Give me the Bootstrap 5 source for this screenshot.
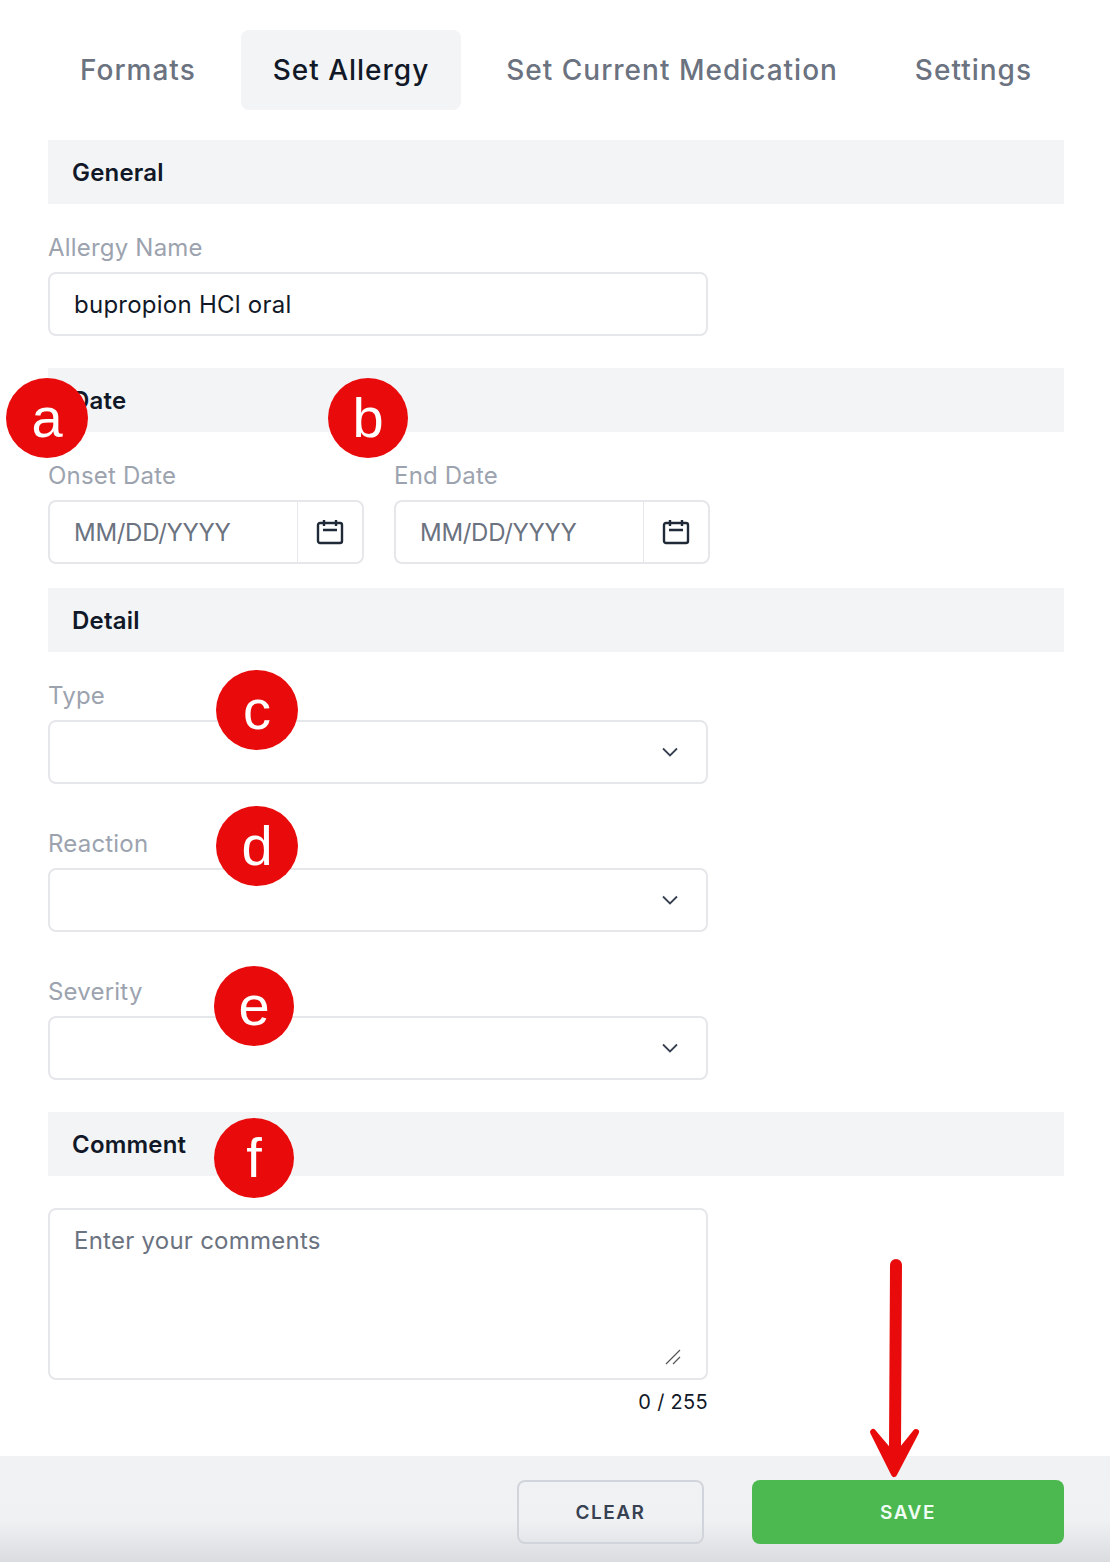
<!DOCTYPE html>
<html lang="en">
  <head>
    <meta charset="UTF-8" />
    <meta name="viewport" content="width=device-width, initial-scale=1.0" />
    <title>Set Allergy</title>
    <link
      href="https://cdn.jsdelivr.net/npm/bootstrap@5.3.2/dist/css/bootstrap.min.css"
      rel="stylesheet"
    />
    <style>
      html, body { height: 100%; overflow: hidden; }
      body { font-family: Inter, "Liberation Sans", sans-serif; color: #111827; background: #fff; }
      .page-wrap { position: relative; width: 1110px; height: 1562px; overflow: hidden; }
      .form-area { padding: 30px 46px 0 48px; height: 1456px; }

      .tab-row { height: 80px; margin-bottom: 30px; justify-content: space-between; }
      .tab-row .nav-link {
        height: 80px; padding: 0 32px; display: flex; align-items: center;
        font-size: 28px; font-weight: 500; letter-spacing: 1px; color: #6b7280;
        border-radius: 8px; background: none;
      }
      .tab-row .nav-link.active { background: #f3f4f6; color: #111827; }

      .section-bar {
        height: 64px; background: #f3f4f6; padding: 2px 24px 0; display: flex; align-items: center;
        font-size: 24px; font-weight: 600; color: #111827; margin: 0; letter-spacing: .2px;
      }
      .bar-gap-lg { margin-top: 32px; }
      .bar-gap-md { margin-top: 24px; }
      .field-first { padding-top: 28px; }
      .field-next { padding-top: 44px; }
      .field-label { display: block; font-size: 24px; line-height: 32px; color: #9ca3af; margin: 0 0 8px; letter-spacing: .2px; }
      .field-box { width: 660px; }
      .form-control, .form-select, .input-group-text { border: 2px solid #e5e7eb; border-radius: 8px; }
      .form-control, .form-select {
        height: 64px; padding: 1px 24px 0; font-size: 24px; color: #111827; box-shadow: none; letter-spacing: .25px;
      }
      .form-control::placeholder { color: #6b7280; opacity: 1; }
      .form-select {
        background-image: url("data:image/svg+xml,%3csvg xmlns='http://www.w3.org/2000/svg' viewBox='0 0 18 12'%3e%3cpath fill='none' stroke='%23374151' stroke-width='1.8' d='M2 2.5l7 7 7-7'/%3e%3c/svg%3e");
        background-position: right 27px center; background-size: 18px 12px;
      }
      .date-group { width: 316px; flex-wrap: nowrap; }
      .date-group .form-control { border-right: 0; padding-right: 0; min-width: 0; letter-spacing: -.3px; }
      .date-group .input-group-text { width: 68px; padding: 0; justify-content: center; background: #fff; }
      .date-row { gap: 30px; }
      .comment-wrap { position: relative; }
      textarea.form-control { height: 172px; padding-top: 13px; resize: none; }
      .resize-mark { position: absolute; right: 27px; bottom: 15px; }
      .char-count { font-size: 20px; line-height: 28px; color: #111827; text-align: right; margin-top: 8px; letter-spacing: .3px; }

      .footer-bar {
        height: 106px; padding: 24px 46px 0 0; gap: 48px;
        background: linear-gradient(to bottom, #f1f2f4 0%, #f0f1f3 60%, #dadcdf 100%);
      }
      .footer-bar .btn {
        height: 64px; padding-top: 8px; font-size: 19px; font-weight: 600; letter-spacing: 1.5px; border-radius: 8px;
      }
      .clear-btn { width: 187px; border: 2px solid #d1d5db; color: #374151; background: transparent; }
      .save-btn { width: 312px; border: 0; background: #4cb950; color: #f0fdf4; }

      .mark-dot {
        position: absolute; border-radius: 50%; background: #e90b0b; color: #fff;
        display: flex; align-items: center; justify-content: center;
        font-family: "Liberation Sans", Arial, sans-serif; font-size: 56px; line-height: 1;
      }
      .dot-a { left: 6px; top: 378px; width: 82px; height: 80px; }
      .dot-b { left: 328px; top: 378px; width: 80px; height: 80px; }
      .dot-c { left: 216px; top: 670px; width: 82px; height: 80px; }
      .dot-d { left: 216px; top: 806px; width: 82px; height: 80px; }
      .dot-e { left: 214px; top: 966px; width: 80px; height: 80px; }
      .dot-f { left: 214px; top: 1118px; width: 80px; height: 80px; }
      .red-arrow { position: absolute; left: 860px; top: 1250px; }
    </style>
  </head>
  <body>
    <div class="page-wrap">
      <div class="form-area">
        <!-- Tabs -->
        <ul class="nav tab-row">
          <li class="nav-item"><a class="nav-link" href="#">Formats</a></li>
          <li class="nav-item"><a class="nav-link active" href="#">Set Allergy</a></li>
          <li class="nav-item"><a class="nav-link" href="#">Set Current Medication</a></li>
          <li class="nav-item"><a class="nav-link" href="#">Settings</a></li>
        </ul>

        <form>
          <h6 class="section-bar">General</h6>
          <div class="field-box field-first">
            <label class="field-label" for="allergyName">Allergy Name</label>
            <input class="form-control" id="allergyName" type="text" value="bupropion HCl oral" />
          </div>

          <h6 class="section-bar bar-gap-lg">Date</h6>
          <div class="d-flex date-row field-first">
            <div>
              <label class="field-label" for="onsetDate">Onset Date</label>
              <div class="input-group date-group">
                <input class="form-control" id="onsetDate" type="text" placeholder="MM/DD/YYYY" />
                <span class="input-group-text">
                  <svg width="28" height="26" viewBox="0 0 28 26" fill="none" stroke="#1f2937" stroke-width="2.4"><rect x="2" y="4" width="24" height="20" rx="2"/><path d="M8 1v6M20 1v6M7 11h14"/></svg>
                </span>
              </div>
            </div>
            <div>
              <label class="field-label" for="endDate">End Date</label>
              <div class="input-group date-group">
                <input class="form-control" id="endDate" type="text" placeholder="MM/DD/YYYY" />
                <span class="input-group-text">
                  <svg width="28" height="26" viewBox="0 0 28 26" fill="none" stroke="#1f2937" stroke-width="2.4"><rect x="2" y="4" width="24" height="20" rx="2"/><path d="M8 1v6M20 1v6M7 11h14"/></svg>
                </span>
              </div>
            </div>
          </div>

          <h6 class="section-bar bar-gap-md">Detail</h6>
          <div class="field-box field-first">
            <label class="field-label" for="typeSel">Type</label>
            <select class="form-select" id="typeSel"><option></option></select>
          </div>
          <div class="field-box field-next">
            <label class="field-label" for="reactionSel">Reaction</label>
            <select class="form-select" id="reactionSel"><option></option></select>
          </div>
          <div class="field-box field-next">
            <label class="field-label" for="severitySel">Severity</label>
            <select class="form-select" id="severitySel"><option></option></select>
          </div>

          <h6 class="section-bar bar-gap-lg">Comment</h6>
          <div class="field-box comment-wrap bar-gap-lg">
            <textarea class="form-control" placeholder="Enter your comments"></textarea>
            <svg class="resize-mark" width="16" height="16" viewBox="0 0 16 16" stroke="#555" stroke-width="1.2"><path d="M1 15L15 1M8 15l7-7"/></svg>
          </div>
          <div class="field-box char-count">0 / 255</div>
        </form>
      </div>

      <div class="footer-bar d-flex justify-content-end">
        <button type="button" class="btn clear-btn">CLEAR</button>
        <button type="button" class="btn save-btn">SAVE</button>
      </div>

      <!-- Annotations over the screenshot -->
      <div class="mark-dot dot-a">a</div>
      <div class="mark-dot dot-b">b</div>
      <div class="mark-dot dot-c">c</div>
      <div class="mark-dot dot-d">d</div>
      <div class="mark-dot dot-e">e</div>
      <div class="mark-dot dot-f">f</div>
      <svg class="red-arrow" width="70" height="232" viewBox="0 0 70 232" fill="#e90b0b" stroke="#e90b0b" stroke-linecap="round" stroke-linejoin="round">
        <path d="M36 15L35 200" fill="none" stroke-width="12"/>
        <path d="M13 182L34 224L56 182L35 208Z" stroke-width="6"/>
      </svg>
    </div>

    <script src="https://cdn.jsdelivr.net/npm/bootstrap@5.3.2/dist/js/bootstrap.bundle.min.js"></script>
  </body>
</html>
